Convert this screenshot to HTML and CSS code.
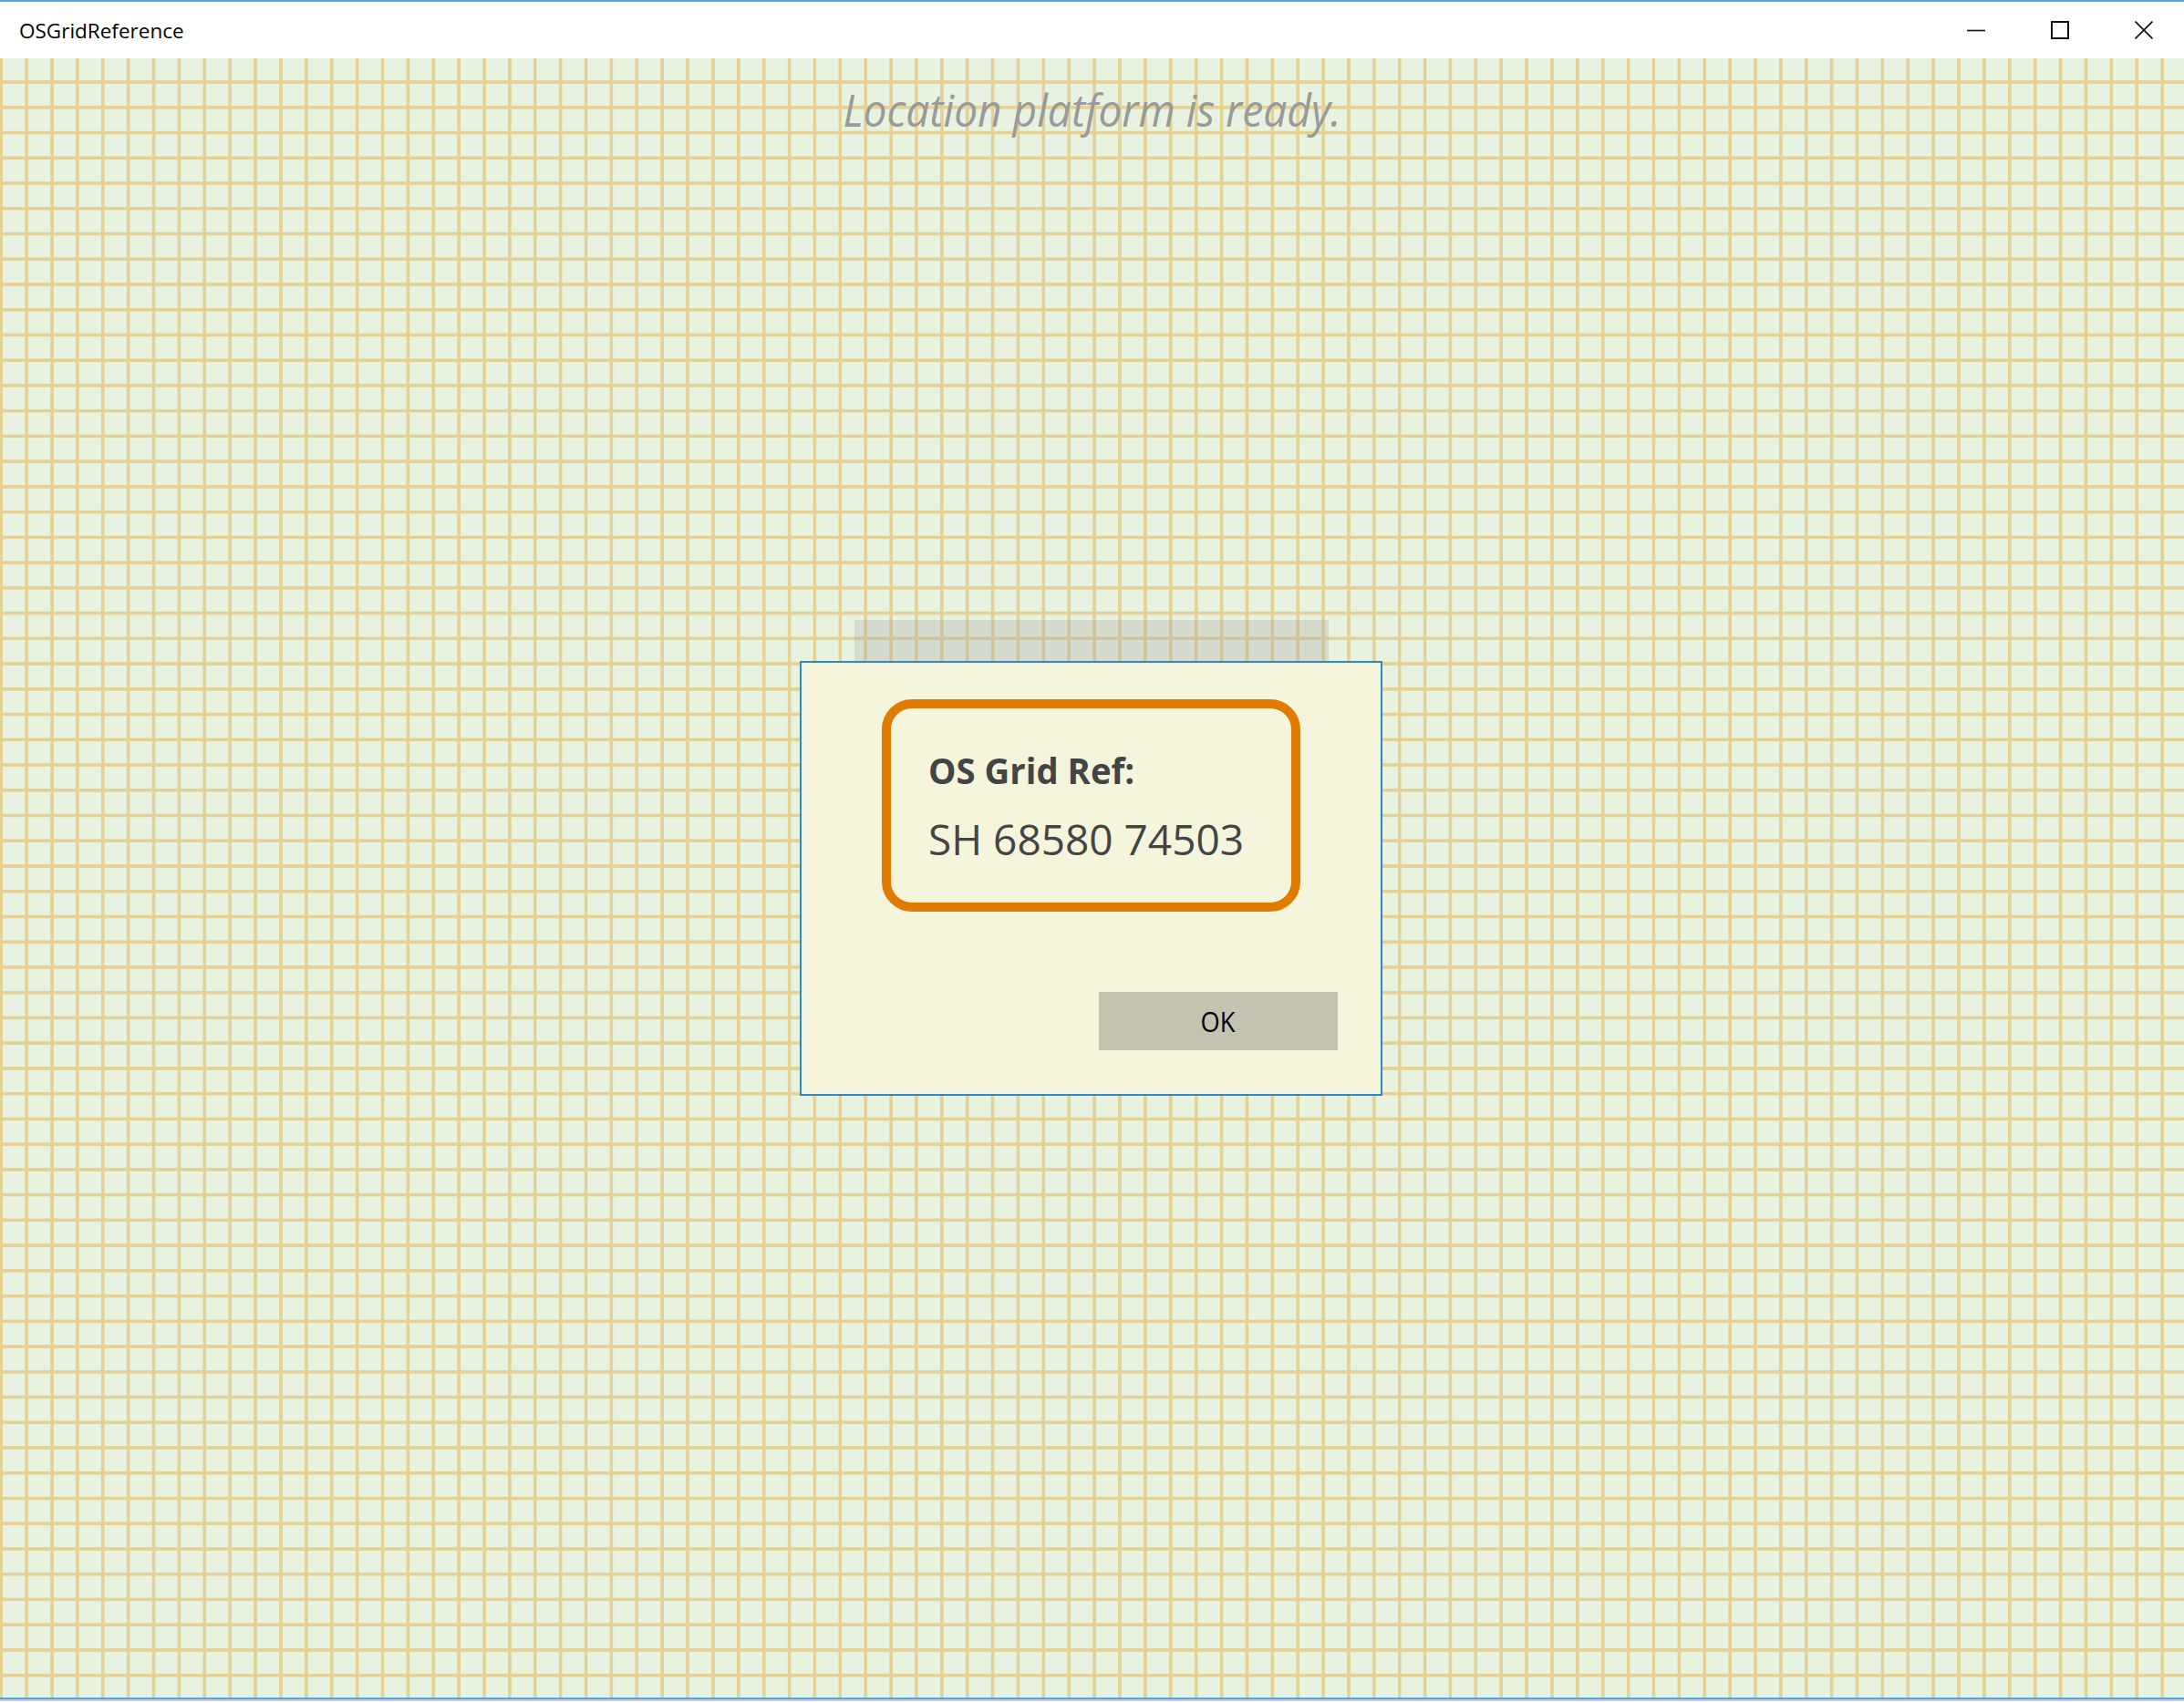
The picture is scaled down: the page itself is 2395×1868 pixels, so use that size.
FILE: index.html
```html
<!DOCTYPE html>
<html lang="en">
<head>
<meta charset="utf-8">
<title>OSGridReference</title>
<link rel="stylesheet" href="styles.css">
</head>
<body>
<div class="window">
  <header class="titlebar">
    <span class="title">OSGridReference</span>
    <div class="controls">
      <button class="ctl" aria-label="Minimize">
        <svg width="20" height="20" viewBox="0 0 20 20"><path d="M0 10.5H20" stroke="#111" stroke-width="1.6" fill="none"/></svg>
      </button>
      <button class="ctl" aria-label="Maximize">
        <svg width="20" height="20" viewBox="0 0 20 20"><rect x="1" y="1" width="18" height="18" stroke="#111" stroke-width="2" fill="none"/></svg>
      </button>
      <button class="ctl" aria-label="Close">
        <svg width="20" height="20" viewBox="0 0 20 20"><path d="M0.5 0.5L19.5 19.5M19.5 0.5L0.5 19.5" stroke="#111" stroke-width="1.7" fill="none"/></svg>
      </button>
    </div>
  </header>
  <main class="canvas">
    <p class="status"><span class="status-text">Location platform is ready.</span></p>
    <div class="shade"></div>
    <div class="dialog">
      <div class="gridref">
        <div class="label"><span class="label-text">OS Grid Ref:</span></div>
        <div class="value">SH 68580 74503</div>
      </div>
      <div class="actions">
        <button class="ok"><span class="ok-text">OK</span></button>
      </div>
    </div>
  </main>
  <div class="bottom-edge"></div>
</div>
</body>
</html>
```

FILE: styles.css
```css
html, body {
  margin: 0;
  padding: 0;
}

body {
  width: 2395px;
  height: 1868px;
  overflow: hidden;
  font-family: "Open Sans", "Noto Sans", sans-serif;
  background: #ffffff;
}

.window {
  width: 2395px;
  height: 1868px;
  box-sizing: border-box;
  border-top: 2px solid #4aa8e6;
  display: flex;
  flex-direction: column;
}

.titlebar {
  height: 62px;
  flex: 0 0 62px;
  background: #ffffff;
  display: flex;
  align-items: center;
  justify-content: space-between;
  padding-left: 21px;
}

.title {
  font-size: 22.5px;
  color: #000000;
  line-height: normal;
}

.controls {
  display: flex;
  height: 62px;
}

.ctl {
  width: 92px;
  height: 62px;
  border: 0;
  padding: 0 0 0 4px;
  margin: 0;
  background: transparent;
  display: flex;
  align-items: center;
  justify-content: center;
}

.ctl svg {
  display: block;
}

.canvas {
  position: relative;
  flex: 0 0 1800px;
  height: 1800px;
  box-sizing: border-box;
  border-bottom: 2px solid #4aa8e6;
  padding-top: 32px;
  background-color: #e8f2e0;
  background-image:
    repeating-linear-gradient(90deg,
      rgba(229, 209, 150, 0) -12.64px,
      rgba(229, 209, 150, 0) -0.9px,
      #e5d196 -0.1px,
      #e5d196 2.7px,
      rgba(229, 209, 150, 0) 3.5px,
      rgba(229, 209, 150, 0) 15.24px),
    repeating-linear-gradient(180deg,
      rgba(229, 209, 150, 0) -15.57px,
      rgba(229, 209, 150, 0) -3.9px,
      #e5d196 -3.1px,
      #e5d196 -0.3px,
      rgba(229, 209, 150, 0) 0.5px,
      rgba(229, 209, 150, 0) 12.17px);
  overflow: hidden;
}

.status {
  margin: 0;
  text-align: center;
  font-size: 49px;
  line-height: 49px;
  font-style: italic;
  color: #9a9a9a;
}

.status-text {
  display: inline-block;
  transform: scaleX(0.94);
  transform-origin: center;
}

.shade {
  position: absolute;
  left: 937px;
  top: 616px;
  width: 520px;
  height: 60px;
  background: rgba(160, 160, 160, 0.26);
}

.dialog {
  position: absolute;
  left: 877px;
  top: 661px;
  width: 639px;
  height: 477px;
  box-sizing: border-box;
  border: 2px solid #2a8ad0;
  background: #f5f5dc;
  padding: 40px 47px 0 88px;
  display: flex;
  flex-direction: column;
}

.gridref {
  width: 459px;
  height: 233px;
  box-sizing: border-box;
  border: 10px solid #e07b00;
  border-radius: 33px;
  padding: 45px 0 0 41px;
  color: #444444;
}

.label {
  font-size: 39.5px;
  font-weight: 700;
  line-height: 47px;
  white-space: nowrap;
}

.label-text {
  display: inline-block;
  transform: scaleX(0.97);
  transform-origin: left center;
}

.value {
  margin-top: 24px;
  font-size: 46px;
  line-height: 55px;
  white-space: nowrap;
}

.actions {
  display: flex;
  justify-content: flex-end;
  margin-top: 88px;
}

.ok {
  width: 262px;
  height: 64px;
  border: 0;
  margin: 0;
  padding: 0;
  background: #c4c3b0;
  color: #000000;
  font-family: "Open Sans", "Noto Sans", sans-serif;
  font-size: 31px;
  line-height: 64px;
  display: flex;
  align-items: center;
  justify-content: center;
}

.ok-text {
  display: inline-block;
  transform: scaleX(0.88);
}

.bottom-edge {
  flex: 0 0 2px;
  height: 2px;
  background: #cfcfcf;
}
```
